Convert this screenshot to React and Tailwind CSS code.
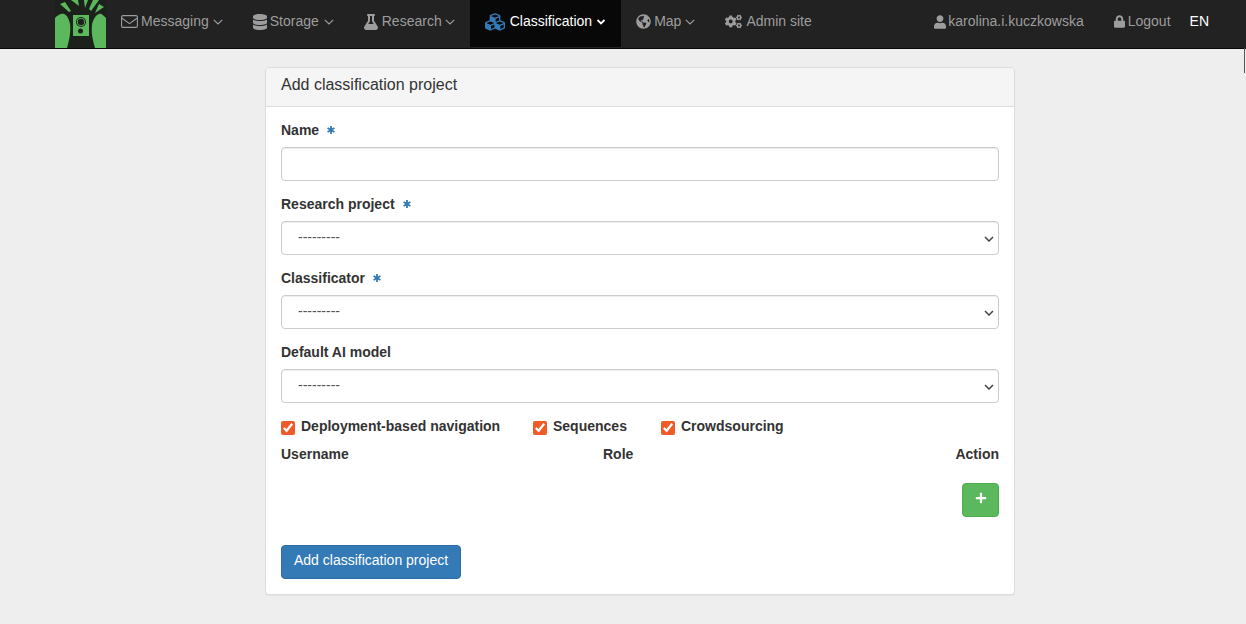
import React from "react";
import { FaDatabase, FaFlask, FaCubes, FaGlobeAmericas, FaCogs, FaUser, FaLock, FaPlus } from "react-icons/fa";

const font = { fontFamily: '"Liberation Sans", Arial, sans-serif' };

function Logo() {
  return (
    <svg width="51" height="48" viewBox="0 0 51 48" className="shrink-0 block">
      <rect width="51" height="48" fill="#1c211c" />
      <g fill="#5cb85c">
        <path d="M0 18 C3 15 6 13 9 14 C12 15 14 19 15 24 C16 32 14 41 12 48 L0 48 Z" />
        <path d="M51 18 C48 15 46 13 44 14 C41 15 38 19 37 25 C36 33 38 41 40 48 L51 48 Z" />
        <path d="M5 4 L10 2 L16 11 L14 12 Z" />
        <path d="M16 0 L23 0 L24 6 Z" />
        <path d="M29 0 L33 0 L30 8 Z" />
        <path d="M38 0 L44 0 L36 11 L34 9 Z" />
        <path d="M44 4 L49 7 L40 13 Z" />
        <rect x="18" y="15" width="16" height="21" />
      </g>
      <circle cx="26" cy="22" r="5" fill="#1c211c" />
      <circle cx="26" cy="22" r="4" fill="#5cb85c" />
      <circle cx="26" cy="22" r="3.2" fill="#1c211c" />
      <circle cx="25.5" cy="31" r="2.5" fill="#1c211c" />
    </svg>
  );
}

function Envelope() {
  return (
    <svg width="17" height="13" viewBox="0 0 17 13" fill="none" stroke="currentColor" strokeWidth="1.1">
      <rect x="0.6" y="0.6" width="15.8" height="11.8" rx="1.4" />
      <path d="M1 3.2 L8.5 8.6 L16 3.2" />
    </svg>
  );
}

function Caret({ active, ml }) {
  return (
    <svg width="10" height="6" viewBox="0 0 10 6" fill="none" stroke="currentColor" strokeWidth={active ? 1.8 : 1.2} className={`shrink-0 ${ml}`}>
      <path d={active ? "M1.5 1 L5 4.5 L8.5 1" : "M0.8 0.8 L5 5 L9.2 0.8"} />
    </svg>
  );
}

function NavItem({ icon, label, caret, active, box, gap, ml = "ml-[4px]" }) {
  return (
    <a className={`flex items-center h-[47px] pb-[4px] px-[15px] text-[14px] ${active ? "bg-[#080808] text-white" : "text-[#9d9d9d]"}`}>
      <span className={`flex items-center justify-center shrink-0 ${box} ${gap} ${active ? "text-[#337ab7]" : ""}`}>{icon}</span>
      <span>{label}</span>
      {caret && <Caret active={active} ml={ml} />}
    </a>
  );
}

function Req() {
  return (
    <svg width="8" height="8" viewBox="0 0 8 8" fill="none" stroke="#337ab7" strokeWidth="1.8" className="inline-block ml-[8px] -translate-y-[1px] align-baseline">
      <path d="M4 0 V8 M0.6 2 L7.4 6 M7.4 2 L0.6 6" />
    </svg>
  );
}

function SelectField({ label, req }) {
  return (
    <div className="mb-[15px]">
      <label className="block font-bold text-[14px] leading-[20px] h-[20px] mb-[5px] text-[#333] -translate-y-[2px]">
        {label}
        {req && <Req />}
      </label>
      <div className="relative">
        <select className="block w-full h-[34px] appearance-none border border-[#ccc] rounded-[4px] bg-white pl-[16px] pr-[12px] pb-[2px] text-[14px] text-[#555] shadow-[inset_0_1px_1px_rgba(0,0,0,0.075)]" defaultValue="">
          <option value="">---------</option>
        </select>
        <svg width="10" height="6" viewBox="0 0 10 6" fill="none" stroke="#444" strokeWidth="1.5" className="absolute right-[5px] top-[15px] pointer-events-none">
          <path d="M1 1 L5 5 L9 1" />
        </svg>
      </div>
    </div>
  );
}

function Check({ label, className }) {
  return (
    <label className={`flex items-start font-bold text-[14px] text-[#333] ${className}`}>
      <input type="checkbox" defaultChecked className="w-[14px] h-[14px] mt-[4px] mr-[6px] accent-[#f05a28] shrink-0" />
      <span className="leading-[20px] -mt-[1px]">{label}</span>
    </label>
  );
}

export default function App() {
  return (
    <div className="relative min-h-[624px] bg-[#eeeeee] overflow-hidden" style={font}>
      <nav className="flex items-start h-[49px] bg-[#222222] border-b border-[#080808]">
        <div className="pl-[55px] flex items-start">
          <Logo />
          <NavItem box="w-[17px]" gap="mr-[3px]" icon={<Envelope />} label="Messaging" caret />
          <NavItem box="w-[14px]" gap="mr-[3px]" ml="ml-[5px]" icon={<FaDatabase className="text-[16px]" />} label="Storage" caret />
          <NavItem box="w-[14px]" gap="mr-[4px]" ml="ml-[3px]" icon={<FaFlask className="text-[16px]" />} label="Research" caret />
          <NavItem box="w-[20px]" gap="mr-[5px]" active icon={<FaCubes className="text-[20px]" />} label="Classification" caret />
          <NavItem box="w-[15px]" gap="mr-[3px]" icon={<FaGlobeAmericas className="text-[15px]" />} label="Map" caret />
          <NavItem box="w-[17px]" gap="mr-[4px]" icon={<FaCogs className="text-[17px]" />} label="Admin site" />
        </div>
        <div className="ml-auto flex items-start pr-[37px]">
          <NavItem box="w-[12px]" gap="mr-[2px]" icon={<FaUser className="text-[14px]" />} label="karolina.i.kuczkowska" />
          <NavItem box="w-[11px]" gap="mr-[3px]" icon={<FaLock className="text-[13px]" />} label="Logout" />
          <span className="h-[47px] pb-[4px] flex items-center text-[14px] text-white pl-[4px]">EN</span>
        </div>
      </nav>

      <div className="absolute right-[1px] top-[48px] w-[1px] h-[25px] bg-[#555]" />

      <main className="ml-[265px] mt-[18px] w-[750px] bg-white border border-[#ddd] rounded-[4px] shadow-[0_1px_1px_rgba(0,0,0,0.05)]">
        <div className="h-[39px] px-[15px] pb-[4px] flex items-center bg-[#f5f5f5] border-b border-[#ddd] rounded-t-[3px] text-[16px] text-[#333]">
          Add classification project
        </div>
        <div className="p-[15px]">
          <div className="mb-[15px]">
            <label className="block font-bold text-[14px] leading-[20px] h-[20px] mb-[5px] text-[#333] -translate-y-[2px]">
              Name
              <Req />
            </label>
            <input type="text" className="block w-full h-[34px] border border-[#ccc] rounded-[4px] bg-white px-[12px] text-[14px] text-[#555] shadow-[inset_0_1px_1px_rgba(0,0,0,0.075)]" />
          </div>
          <SelectField label="Research project" req />
          <SelectField label="Classificator" req />
          <SelectField label="Default AI model" />

          <div className="flex h-[20px] -mt-[1px]">
            <Check label="Deployment-based navigation" className="w-[252px]" />
            <Check label="Sequences" className="w-[128px]" />
            <Check label="Crowdsourcing" />
          </div>

          <div className="grid grid-cols-[322px_1fr_auto] mt-[7px] font-bold text-[14px] leading-[20px] text-[#333]">
            <span>Username</span>
            <span>Role</span>
            <span>Action</span>
          </div>

          <div className="flex justify-end mt-[19px]">
            <button className="w-[37px] h-[34px] pb-[5px] flex items-center justify-center bg-[#5cb85c] border border-[#4cae4c] rounded-[4px] text-white">
              <FaPlus className="text-[12px]" />
            </button>
          </div>

          <button className="block mt-[28px] h-[34px] px-[12px] pb-[4px] bg-[#337ab7] border border-[#2e6da4] rounded-[4px] text-white text-[14px] whitespace-nowrap">
            Add classification project
          </button>
        </div>
      </main>
    </div>
  );
}
